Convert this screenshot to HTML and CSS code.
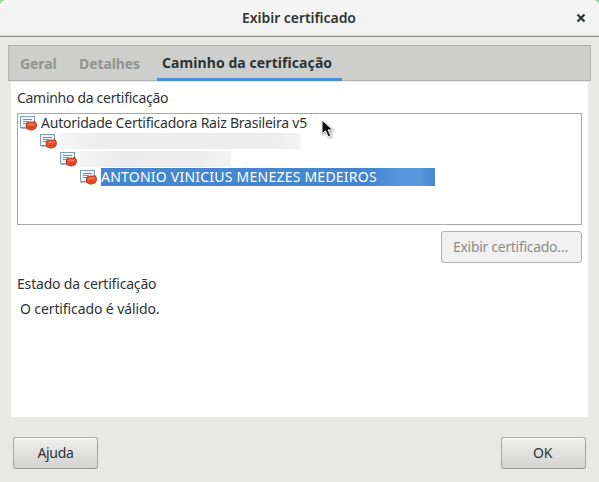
FILE: index.html
```html
<!DOCTYPE html>
<html lang="pt-BR">
<head>
<meta charset="utf-8">
<title>Exibir certificado</title>
<link rel="stylesheet" href="styles.css">
</head>
<body>
<svg class="defs" aria-hidden="true">
  <symbol id="cert" viewBox="0 0 17 16">
    <rect x=".5" y="1.5" width="14" height="11" fill="#edf4f9" stroke="#819fae"/>
    <path d="M1 13.5h7" stroke="#a9bbc4"/>
    <path d="M3 4.5h9M3 6.5h6M3 8.5h4" stroke="#778e9d"/>
    <path d="M6.3 10l.8-2.2 2.2-.2L11 6.8l1.4.6 2.2-1.2 1.2 1.6.7 1.6-.3 2.4-1 2-2 .8-2.2.5-2.6-.6-1.8-1.2z" fill="#ec4f2a" stroke="#a92b18" stroke-width=".9"/>
    <path d="M8.5 9.7l2.2-.8 1.6.8 2-.9" fill="none" stroke="#ff9972"/>
    <path d="M9 12.2l2.4.6 2.6-1" fill="none" stroke="#c63820"/>
  </symbol>
</svg>
<div class="window">
  <header class="titlebar">
    <h1 class="title">Exibir certificado</h1>
    <svg class="close" viewBox="0 0 10 10"><path d="M1.5 1.5l7 7M8.5 1.5l-7 7" stroke="#2e3436" stroke-width="2.2"/></svg>
  </header>
  <nav class="tabs">
    <span class="tab geral">Geral</span>
    <span class="tab detalhes">Detalhes</span>
    <span class="tab active">Caminho da certificação</span>
  </nav>
  <main class="panel">
    <div class="label path-label"><span>Caminho da certificação</span></div>
    <div class="tree">
      <div class="row level0"><svg class="icon"><use href="#cert"/></svg><span class="root-name">Autoridade Certificadora Raiz Brasileira v5</span></div>
      <div class="row level1"><svg class="icon"><use href="#cert"/></svg><span class="redacted first"></span></div>
      <div class="row level2"><svg class="icon"><use href="#cert"/></svg><span class="redacted second"></span></div>
      <div class="row level3"><svg class="icon"><use href="#cert"/></svg><span class="selected">ANTONIO VINICIUS MENEZES MEDEIROS</span></div>
      <svg class="cursor" viewBox="0 0 13 20"><path d="M1 1v14l3.4-3.2 2.8 6 2.6-1.2-2.7-5.6h4.7z" fill="#111" stroke="#fff" stroke-width="1"/></svg>
    </div>
    <div class="actions"><button class="button view" disabled>Exibir certificado…</button></div>
    <div class="label state-label"><span>Estado da certificação</span></div>
    <div class="label state"><span>O certificado é válido.</span></div>
  </main>
  <footer class="footer">
    <button class="button help">Ajuda</button>
    <button class="button ok">OK</button>
  </footer>
</div>
</body>
</html>
```
FILE: styles.css
```css
* { box-sizing: border-box; }
body {
  margin: 0;
  background: #8fda9b;
  color: #2e3436;
  font: 14px/18px "Noto Sans", "Open Sans", sans-serif;
}
.defs { position: absolute; width: 0; height: 0; }
.window {
  display: flex;
  flex-direction: column;
  width: 599px;
  height: 482px;
  overflow: hidden;
  border-radius: 6px 6px 0 0;
  background: #e8e8e6;
}
.titlebar {
  display: flex;
  align-items: center;
  justify-content: flex-end;
  height: 37px;
  padding-right: 13px;
  border-bottom: 1px solid #858887;
  background: linear-gradient(#f5f5f5 0, #f2f2f2 34px, #d9d9d8 36px);
}
.title {
  flex: 1;
  margin: 0;
  padding-left: 22px;
  text-align: center;
  font-size: 14px;
  font-weight: 600;
  letter-spacing: -.05px;
}
.close { width: 10px; height: 10px; }
.tabs {
  display: flex;
  height: 36px;
  margin: 8px 8px 0;
  border: 1px solid #b3b3b1;
  background: #cececc;
}
.tab {
  height: 35px;
  padding-top: 9px;
  white-space: nowrap;
  font-weight: 700;
  letter-spacing: -.1px;
  color: #929492;
}
.geral { width: 59px; padding-left: 11px; }
.detalhes { width: 89px; padding-left: 11px; }
.active {
  width: 185px;
  padding-top: 8px;
  padding-left: 5px;
  border-bottom: 3px solid #4a90d9;
  color: #2e3436;
  letter-spacing: .08px;
}
.panel {
  display: flex;
  flex-direction: column;
  height: 335px;
  margin: 1px 11px 0;
  padding: 7px 6px 0;
  background: #fff;
}
.label { height: 18px; white-space: nowrap; letter-spacing: -.3px; }
.tree {
  position: relative;
  height: 112px;
  margin-top: 6px;
  border: 1px solid #a9a9a9;
}
.row { display: flex; gap: 4px; height: 18px; white-space: nowrap; }
.level0 { padding-left: 2px; }
.level1 { padding-left: 22px; }
.level2 { padding-left: 42px; }
.level3 { padding-left: 62px; }
.icon { width: 17px; height: 16px; margin-top: 1px; flex: none; }
.root-name { letter-spacing: -.23px; }
.redacted { height: 16px; margin-top: 1px; margin-left: -1px; filter: blur(.6px); }
.first { width: 241px; background: linear-gradient(90deg, #f6f6f6, #ededed 15%, #ededed 90%, #f4f4f4); }
.second { width: 151px; background: linear-gradient(90deg, #f4f4f4, #ececec 25%, #ededed 80%, #f4f4f4); }
.selected {
  width: 334px;
  background: linear-gradient(90deg, #4486d0 0, #4486d0 270px, #5997dc 300px, #5997dc 318px, #4486d0);
  color: #fff;
  letter-spacing: .23px;
}
.cursor { position: absolute; left: 303px; top: 5px; width: 13px; height: 20px; filter: drop-shadow(1px 1px 1px #0006); }
.actions { display: flex; justify-content: flex-end; margin-top: 6px; }
.button {
  height: 32px;
  padding: 0;
  border: 1px solid #a6a6a4;
  border-bottom-color: #949492;
  border-radius: 3px;
  background: linear-gradient(#efefee, #d3d3d2);
  box-shadow: inset 0 1px #fff;
  color: #2e3436;
  font: inherit;
  letter-spacing: -.3px;
}
.view { width: 141px; padding-right: 2px; border-color: #b0b0b0; background: #f1f1f1; box-shadow: none; color: #8b8e8f; }
.state-label { margin-top: 12px; letter-spacing: -.18px; }
.state { margin-top: 7px; padding-left: 3px; letter-spacing: -.11px; }
.footer { display: flex; justify-content: space-between; padding: 20px 13px 0; }
.help, .ok { width: 85px; }
.ok { padding-right: 2px; }
```
